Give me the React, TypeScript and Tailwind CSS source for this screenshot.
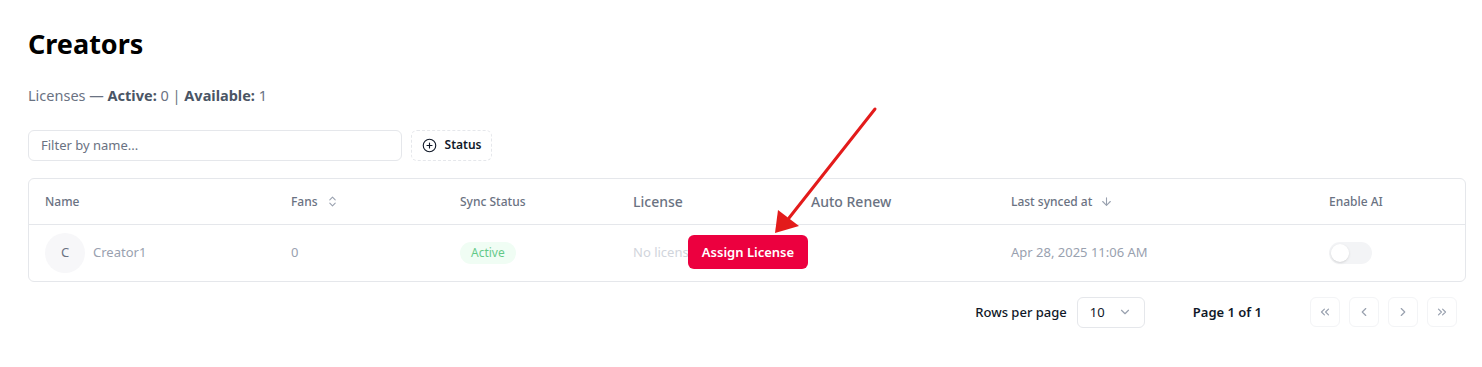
import React from 'react';
import { CirclePlus, ChevronsUpDown, ArrowDown, ChevronDown, ChevronLeft, ChevronRight, ChevronsLeft, ChevronsRight } from 'lucide-react';

function PageButton({ children }: { children: React.ReactNode }) {
  return (
    <button className="flex h-[30px] w-[30px] items-center justify-center rounded-md border border-gray-100 bg-white text-gray-400">
      {children}
    </button>
  );
}

export default function App() {
  return (
    <div className="relative min-h-[367px] w-[1482px] bg-white pl-7 pr-4 pt-7 font-['Noto_Sans',sans-serif]">
      <h1 className="text-[27px] font-bold leading-8 text-black">Creators</h1>

      <p className="mt-[25px] text-[14.5px] text-gray-500">
        Licenses — <span className="font-bold text-gray-600">Active:</span> 0 |{' '}
        <span className="font-bold text-gray-600">Available:</span> 1
      </p>

      <div className="mt-[23px] flex items-center gap-[9px]">
        <input
          className="h-[31px] w-[374px] rounded-md border border-gray-200 px-3 text-[13px] text-gray-700 outline-none placeholder:text-gray-500"
          placeholder="Filter by name..."
        />
        <button className="flex h-[31px] w-[81px] items-center justify-center gap-2 rounded-md border border-dashed border-gray-200 text-xs font-semibold text-gray-900">
          <CirclePlus size={15} strokeWidth={1.8} />
          Status
        </button>
      </div>

      <div className="mt-[17px] overflow-hidden rounded-md border border-gray-200">
        <table className="w-full table-fixed border-collapse text-left">
          <colgroup>
            <col className="w-[246px]" />
            <col className="w-[169px]" />
            <col className="w-[173px]" />
            <col className="w-[178px]" />
            <col className="w-[200px]" />
            <col className="w-[318px]" />
            <col className="w-[154px]" />
          </colgroup>
          <thead>
            <tr className="h-[46px] border-b border-gray-200 text-gray-500">
              <th className="px-4 text-xs font-medium">Name</th>
              <th className="px-4 text-xs font-medium">
                <span className="flex items-center gap-2">
                  Fans <ChevronsUpDown size={13} className="text-gray-400" />
                </span>
              </th>
              <th className="px-4 text-xs font-medium">Sync Status</th>
              <th className="px-4 text-sm font-medium">License</th>
              <th className="px-4 text-sm font-medium">Auto Renew</th>
              <th className="px-4 text-xs font-medium">
                <span className="flex items-center gap-2">
                  Last synced at <ArrowDown size={13} className="text-gray-400" />
                </span>
              </th>
              <th className="px-4 text-xs font-medium">Enable AI</th>
            </tr>
          </thead>
          <tbody>
            <tr className="h-[56px] text-[13px] text-gray-400">
              <td className="px-4">
                <div className="flex items-center gap-2">
                  <div className="flex h-10 w-10 items-center justify-center rounded-full bg-gray-100/70 text-gray-500">C</div>
                  <span>Creator1</span>
                </div>
              </td>
              <td className="px-4">0</td>
              <td className="px-4">
                <span className="inline-flex h-[22px] items-center rounded-full bg-green-50 px-[11px] text-xs text-green-600/60">
                  Active
                </span>
              </td>
              <td className="relative px-4">
                <span className="text-gray-300">No license</span>
                <button className="absolute left-[71px] top-[10px] flex h-[34px] w-[120px] items-center justify-center rounded-md bg-rose-600 text-[13px] font-semibold text-white">
                  Assign License
                </button>
              </td>
              <td className="px-4"></td>
              <td className="px-4">Apr 28, 2025 11:06 AM</td>
              <td className="px-4">
                <div className="flex h-[22px] w-[43px] items-center rounded-full bg-gray-100 p-[2px]">
                  <div className="h-[18px] w-[18px] rounded-full bg-white shadow-sm" />
                </div>
              </td>
            </tr>
          </tbody>
        </table>
      </div>

      <div className="mt-[15px] flex items-center justify-end pr-[9px] text-[13px] text-gray-900">
        <span className="font-medium">Rows per page</span>
        <button className="ml-2.5 flex h-[31px] w-[68px] items-center justify-between rounded-md border border-gray-200 px-3">
          <span>10</span>
          <ChevronDown size={14} className="text-gray-400" />
        </button>
        <span className="ml-12 mr-12 font-semibold">Page 1 of 1</span>
        <div className="flex items-center gap-[9px]">
          <PageButton><ChevronsLeft size={14} /></PageButton>
          <PageButton><ChevronLeft size={14} /></PageButton>
          <PageButton><ChevronRight size={14} /></PageButton>
          <PageButton><ChevronsRight size={14} /></PageButton>
        </div>
      </div>

      <svg className="pointer-events-none absolute left-0 top-0" width="1482" height="367">
        <line x1="875" y1="109" x2="789" y2="218" stroke="#e31b1b" strokeWidth="3" strokeLinecap="round" />
        <polygon points="775,233 778,210 799,226" fill="#e31b1b" />
      </svg>
    </div>
  );
}
